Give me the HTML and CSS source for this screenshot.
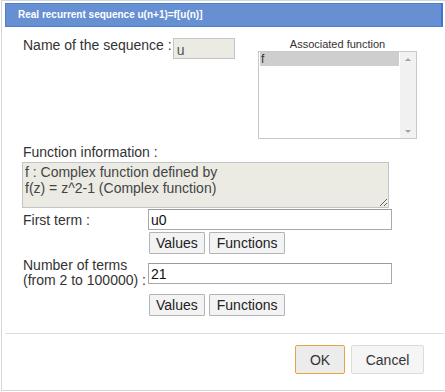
FILE: index.html
```html
<!DOCTYPE html>
<html>
<head lang="en">
    <meta charset="UTF-8">
    <title>Real recurrent sequence</title>
    <link rel="stylesheet" href="styles.css">
</head>
<body>
<div class="dialog">
    <div class="dialog-title">Real recurrent sequence u(n+1)=f[u(n)]</div>
    <div class="dialog-body">
        <div class="top-row">
            <div class="name-field">
                <label class="name-label">Name of the sequence :</label>
                <input class="name-input" type="text" value="u" disabled>
            </div>
            <div class="assoc">
                <div class="assoc-label">Associated function</div>
                <div class="listbox">
                    <div class="list-items">
                        <div class="list-item selected">f</div>
                    </div>
                    <div class="list-scroll">
                        <span class="arrow-up"></span>
                        <span class="arrow-down"></span>
                    </div>
                </div>
            </div>
        </div>
        <div class="info-label">Function information :</div>
        <textarea class="info-box" readonly>f : Complex function defined by
f(z) = z^2-1 (Complex function)</textarea>
        <div class="form-grid">
            <label class="form-label">First term :</label>
            <input class="text-input" type="text" value="u0">
            <div></div>
            <div class="btn-row">
                <button class="small-btn">Values</button>
                <button class="small-btn">Functions</button>
            </div>
            <label class="form-label two-lines">Number of terms<br>(from 2 to 100000) :</label>
            <input class="text-input terms-input" type="text" value="21">
            <div></div>
            <div class="btn-row btn-row-last">
                <button class="small-btn">Values</button>
                <button class="small-btn">Functions</button>
            </div>
        </div>
    </div>
    <div class="dialog-footer">
        <button class="footer-btn btn-ok">OK</button>
        <button class="footer-btn btn-cancel">Cancel</button>
    </div>
</div>
</body>
</html>
```

FILE: styles.css
```css
* {
    box-sizing: border-box;
}
body {
    margin: 0px;
    background: #ffffff;
    font-family: "Liberation Sans", Arial, sans-serif;
    color: #333333;
    overflow: hidden;
}
.dialog {
    margin-left: 1px;
    height: 391px;
    border: 1px solid #d6d6d6;
    border-right: none;
    background: #ffffff;
}
.dialog-title {
    margin: 2px 2px 0px 3px;
    height: 24px;
    line-height: 22px;
    padding-left: 12px;
    background: #6690d2;
    border: 1px solid #4d7fd0;
    border-right: 2px solid #3c74d6;
    color: #ffffff;
    font-size: 10px;
    font-weight: bold;
}
.dialog-body {
    padding: 10px 28px 17px 21px;
}
.top-row {
    display: flex;
    justify-content: space-between;
    align-items: flex-start;
}
.name-field {
    display: flex;
    align-items: flex-start;
}
.name-label {
    font-size: 14px;
    line-height: 16px;
    margin-right: 1px;
}
.name-input {
    margin-top: 1px;
    width: 62px;
    height: 21px;
    padding: 2px 3px 0px 3px;
    border: 1px solid #c4c4c4;
    background: #ebebe4;
    color: #545454;
    font-family: inherit;
    font-size: 14px;
}
.assoc {
    margin-top: 1px;
    width: 159px;
}
.assoc-label {
    font-size: 11px;
    line-height: 13px;
    text-align: center;
}
.listbox {
    display: flex;
    height: 88px;
    border: 1px solid #c8c8c8;
}
.list-items {
    flex: 1;
    padding: 0px 1px;
}
.list-item {
    height: 14px;
    line-height: 14px;
    padding-left: 1px;
    font-size: 12px;
    color: #333333;
}
.list-item.selected {
    background: #cecece;
}
.list-scroll {
    width: 16px;
    background: #f1f1f1;
    display: flex;
    flex-direction: column;
    justify-content: space-between;
    align-items: center;
    padding: 6px 0px 5px 0px;
}
.arrow-up {
    width: 0px;
    height: 0px;
    border-left: 3px solid transparent;
    border-right: 3px solid transparent;
    border-bottom: 3px solid #a3a3a3;
}
.arrow-down {
    width: 0px;
    height: 0px;
    border-left: 3px solid transparent;
    border-right: 3px solid transparent;
    border-top: 3px solid #a3a3a3;
}
.info-label {
    margin-top: 5px;
    font-size: 14px;
    line-height: 16px;
}
.info-box {
    display: block;
    margin: 2px 0px 0px -1px;
    width: 367px;
    height: 46px;
    padding: 1px 2px;
    border: 1px solid #c4c4c4;
    background: #ebebe4;
    color: #444444;
    font-family: inherit;
    font-size: 14px;
    line-height: 16px;
    resize: vertical;
    outline: none;
}
.form-grid {
    margin-top: 1px;
    display: grid;
    grid-template-columns: 125px 244px;
}
.form-label {
    font-size: 14px;
    line-height: 16px;
    padding-top: 3px;
}
.form-label.two-lines {
    line-height: 15px;
    padding-top: 4px;
    margin-bottom: -4px;
}
.text-input {
    height: 21px;
    padding: 0px 2px;
    border: 1px solid #a9a9a9;
    border-top-color: #9a9a9a;
    background: #ffffff;
    color: #111111;
    font-family: inherit;
    font-size: 14px;
    outline: none;
}
.terms-input {
    margin-top: 9px;
}
.btn-row {
    display: flex;
    gap: 4px;
    margin: 2px 0px 0px 1px;
}
.btn-row-last {
    margin-top: 10px;
}
.small-btn {
    height: 22px;
    padding: 0px 6px;
    border: 1px solid #b4b4b4;
    border-radius: 1px;
    background: #f3f3f3;
    color: #222222;
    font-family: inherit;
    font-size: 14px;
}
.small-btn + .small-btn {
    padding: 0px 7px;
}
.dialog-footer {
    margin: 0px 1px 0px 3px;
    border-top: 1px solid #dedede;
    padding: 11px 20px 16px 0px;
    display: flex;
    justify-content: flex-end;
    gap: 6px;
}
.footer-btn {
    height: 29px;
    border-radius: 2px;
    font-family: inherit;
    font-size: 14px;
    color: #333333;
}
.btn-ok {
    width: 50px;
    border: 1px solid #e6a33e;
    background: #ececec;
}
.btn-cancel {
    width: 73px;
    border: 1px solid #dcdcdc;
    background: #f5f5f5;
}
```
